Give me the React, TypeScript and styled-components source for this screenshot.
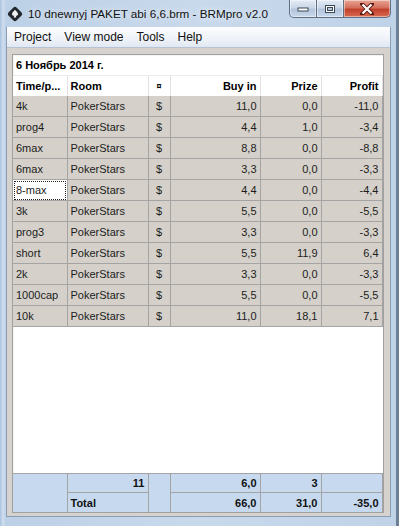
import React from 'react';
import styled, { createGlobalStyle } from 'styled-components';

const GlobalStyle = createGlobalStyle`
    html, body {
        margin: 0;
        padding: 0;
        width: 399px;
        height: 526px;
        overflow: hidden;
        background: #2a3a4c;
    }
`

const COLS = [54, 81, 22, 90, 61, 61];

const Window = styled.div`
    width: 399px;
    height: 526px;
    display: flex;
    flex-direction: column;
    background: linear-gradient(90deg, #a9c2dd 0px, #cfdeef 3px, #bcd0e6 6px, #c9d9ec 50%, #bfd2e7 100%);
    box-sizing: border-box;
    border-right: 3px solid #6d7f94;
`

const TitleBar = styled.div`
    height: 27px;
    display: flex;
    align-items: center;
    padding-left: 7px;
    flex-shrink: 0;
`

const TitleText = styled.span`
    margin-left: 5px;
    font-family: "Liberation Sans", Arial, sans-serif;
    font-size: 11.7px;
    color: #111;
    white-space: nowrap;
    text-shadow: 0 0 6px rgba(255, 255, 255, 0.9);
`

const CaptionGroup = styled.div`
    display: flex;
    align-self: flex-start;
    margin-left: auto;
    margin-right: 5px;
`

const CaptionButton = styled.div<{ $w: number; $close?: boolean; $first?: boolean }>`
    width: ${p => p.$w}px;
    height: 18px;
    box-sizing: border-box;
    display: flex;
    align-items: center;
    justify-content: center;
    border: 1px solid #5f6f86;
    border-top: none;
    border-left: ${p => (p.$first ? '1px solid #5f6f86' : 'none')};
    border-bottom-left-radius: ${p => (p.$first ? '5px' : '0')};
    border-bottom-right-radius: ${p => (p.$close ? '5px' : '0')};
    background: ${p => p.$close
        ? 'linear-gradient(#e8a493 0%, #d4705c 45%, #c0402c 55%, #d86a50 100%)'
        : 'linear-gradient(#e3ebf5 0%, #cbd8e8 45%, #b3c5dc 55%, #c9d8ea 100%)'};
    box-shadow: inset 0 0 0 1px rgba(255, 255, 255, 0.45);
`

const Client = styled.div`
    flex: 1;
    display: flex;
    flex-direction: column;
    margin: 0 5px 9px 6px;
    background: #d6d3ce;
    border: 1px solid #8c9db3;
    border-top: none;
`

const MenuBar = styled.div`
    height: 20px;
    display: flex;
    align-items: center;
    padding-left: 1px;
    background: linear-gradient(#fdfdfe, #eef2f8 60%, #e1e8f2);
    border-bottom: 1px solid #b6c3d4;
    flex-shrink: 0;
`

const MenuItem = styled.span`
    padding: 0 7px 0 6px;
    font-family: "Liberation Sans", Arial, sans-serif;
    font-size: 12px;
    color: #111;
`

const Panel = styled.div`
    flex: 1;
    display: flex;
    flex-direction: column;
    margin: 6px 6px 3px 5px;
    background: #fff;
    border: 1px solid #a0a0a0;
    box-shadow: inset 1px 1px 0 #f4f4f4;
    font-family: "Liberation Sans", Arial, sans-serif;
    font-size: 11px;
    color: #1c1c1c;
`

const DateRow = styled.div`
    height: 21px;
    display: flex;
    align-items: center;
    padding-left: 3px;
    font-weight: bold;
    color: #000;
    border-bottom: 1px solid #ececec;
    box-sizing: border-box;
`

const Grid = styled.table`
    border-collapse: collapse;
    table-layout: fixed;
    width: ${COLS.reduce((a, b) => a + b, 0)}px;
`

const HeadCell = styled.th<{ $align: string; $small?: boolean }>`
    height: 20px;
    padding: 0 3px;
    text-align: ${p => p.$align};
    font-weight: bold;
    font-size: ${p => (p.$small ? '9px' : '11px')};
    color: #000;
    border-right: 1px solid #e2e2e2;
    background: #fff;
    white-space: nowrap;
    overflow: hidden;
`

const Cell = styled.td<{ $align: string; $selected?: boolean }>`
    height: 20px;
    padding: 0 3px;
    text-align: ${p => p.$align};
    background: ${p => (p.$selected ? '#fff' : '#d5d1ca')};
    border-right: 1px solid #a4a4a4;
    border-bottom: 1px solid #a4a4a4;
    outline: ${p => (p.$selected ? '1px dotted #222' : 'none')};
    outline-offset: -2px;
    white-space: nowrap;
    overflow: hidden;
`

const Spacer = styled.div`
    flex: 1;
`

const FootCell = styled.td<{ $align: string; $h: number; $last?: boolean }>`
    height: ${p => p.$h}px;
    padding: 0 3px;
    text-align: ${p => p.$align};
    font-weight: bold;
    color: #111;
    background: #c6d9ef;
    border-right: 1px solid #a4a4a4;
    border-bottom: ${p => (p.$last ? 'none' : '1px solid #a4a4a4')};
    border-top: 1px solid #a4a4a4;
`

const rows = [
    ['4k', '11,0', '0,0', '-11,0'],
    ['prog4', '4,4', '1,0', '-3,4'],
    ['6max', '8,8', '0,0', '-8,8'],
    ['6max', '3,3', '0,0', '-3,3'],
    ['8-max', '4,4', '0,0', '-4,4'],
    ['3k', '5,5', '0,0', '-5,5'],
    ['prog3', '3,3', '0,0', '-3,3'],
    ['short', '5,5', '11,9', '6,4'],
    ['2k', '3,3', '0,0', '-3,3'],
    ['1000cap', '5,5', '0,0', '-5,5'],
    ['10k', '11,0', '18,1', '7,1'],
];

const AppIcon = () => (
    <svg width="16" height="16" viewBox="0 0 16 16">
        <rect x="2.3" y="2.3" width="11.4" height="11.4" rx="2.5" transform="rotate(45 8 8)" fill="#23272e" />
        <path d="M8 3.8 C9.5 5.6 11 6.6 11 8.3 C11 9.5 9.9 10.1 8.8 9.5 L9.3 11.4 L6.7 11.4 L7.2 9.5 C6.1 10.1 5 9.5 5 8.3 C5 6.6 6.5 5.6 8 3.8 Z" fill="#f2f2f2" />
    </svg>
);

const Cols = () => (
    <colgroup>
        {COLS.map((w, i) => <col key={i} width={w} />)}
    </colgroup>
);

const App: React.FC = () => {
    return (
        <Window>
            <GlobalStyle />
            <TitleBar>
                <AppIcon />
                <TitleText>10 dnewnyj PAKET abi 6,6.brm - BRMpro v2.0</TitleText>
                <CaptionGroup>
                    <CaptionButton $w={28} $first>
                        <svg width="12" height="6" viewBox="0 0 12 6">
                            <rect x="1" y="2" width="10" height="3" fill="#fff" stroke="#3b4656" strokeWidth="1" />
                        </svg>
                    </CaptionButton>
                    <CaptionButton $w={27}>
                        <svg width="12" height="10" viewBox="0 0 12 10">
                            <rect x="1.5" y="1.5" width="9" height="7" fill="none" stroke="#3b4656" strokeWidth="1" />
                            <rect x="2.5" y="2.5" width="7" height="5" fill="none" stroke="#fff" strokeWidth="1" />
                            <rect x="3.5" y="3.5" width="5" height="3" fill="none" stroke="#3b4656" strokeWidth="1" />
                        </svg>
                    </CaptionButton>
                    <CaptionButton $w={47} $close>
                        <svg width="14" height="12" viewBox="0 0 14 12">
                            <path d="M2 1 L12 11 M12 1 L2 11" stroke="#5a1a12" strokeWidth="4" strokeLinecap="square" />
                            <path d="M2.5 1.5 L11.5 10.5 M11.5 1.5 L2.5 10.5" stroke="#fff" strokeWidth="2.2" />
                        </svg>
                    </CaptionButton>
                </CaptionGroup>
            </TitleBar>
            <Client>
                <MenuBar>
                    <MenuItem>Project</MenuItem>
                    <MenuItem>View mode</MenuItem>
                    <MenuItem>Tools</MenuItem>
                    <MenuItem>Help</MenuItem>
                </MenuBar>
                <Panel>
                    <DateRow>6 Ноябрь 2014 г.</DateRow>
                    <Grid>
                        <Cols />
                        <thead>
                            <tr>
                                <HeadCell $align="left">Time/p...</HeadCell>
                                <HeadCell $align="left">Room</HeadCell>
                                <HeadCell $align="center" $small>¤</HeadCell>
                                <HeadCell $align="right">Buy in</HeadCell>
                                <HeadCell $align="right">Prize</HeadCell>
                                <HeadCell $align="right">Profit</HeadCell>
                            </tr>
                        </thead>
                        <tbody>
                            {rows.map((r, i) => (
                                <tr key={i}>
                                    <Cell $align="left" $selected={i === 4}>{r[0]}</Cell>
                                    <Cell $align="left">PokerStars</Cell>
                                    <Cell $align="center">$</Cell>
                                    <Cell $align="right">{r[1]}</Cell>
                                    <Cell $align="right">{r[2]}</Cell>
                                    <Cell $align="right">{r[3]}</Cell>
                                </tr>
                            ))}
                        </tbody>
                    </Grid>
                    <Spacer />
                    <Grid>
                        <Cols />
                        <tbody>
                            <tr>
                                <FootCell $align="left" $h={18} $last rowSpan={2}></FootCell>
                                <FootCell $align="right" $h={18}>11</FootCell>
                                <FootCell $align="left" $h={18} $last rowSpan={2}></FootCell>
                                <FootCell $align="right" $h={18}>6,0</FootCell>
                                <FootCell $align="right" $h={18}>3</FootCell>
                                <FootCell $align="right" $h={18}></FootCell>
                            </tr>
                            <tr>
                                <FootCell $align="left" $h={19} $last>Total</FootCell>
                                <FootCell $align="right" $h={19} $last>66,0</FootCell>
                                <FootCell $align="right" $h={19} $last>31,0</FootCell>
                                <FootCell $align="right" $h={19} $last>-35,0</FootCell>
                            </tr>
                        </tbody>
                    </Grid>
                </Panel>
            </Client>
        </Window>
    );
};

export default App;
